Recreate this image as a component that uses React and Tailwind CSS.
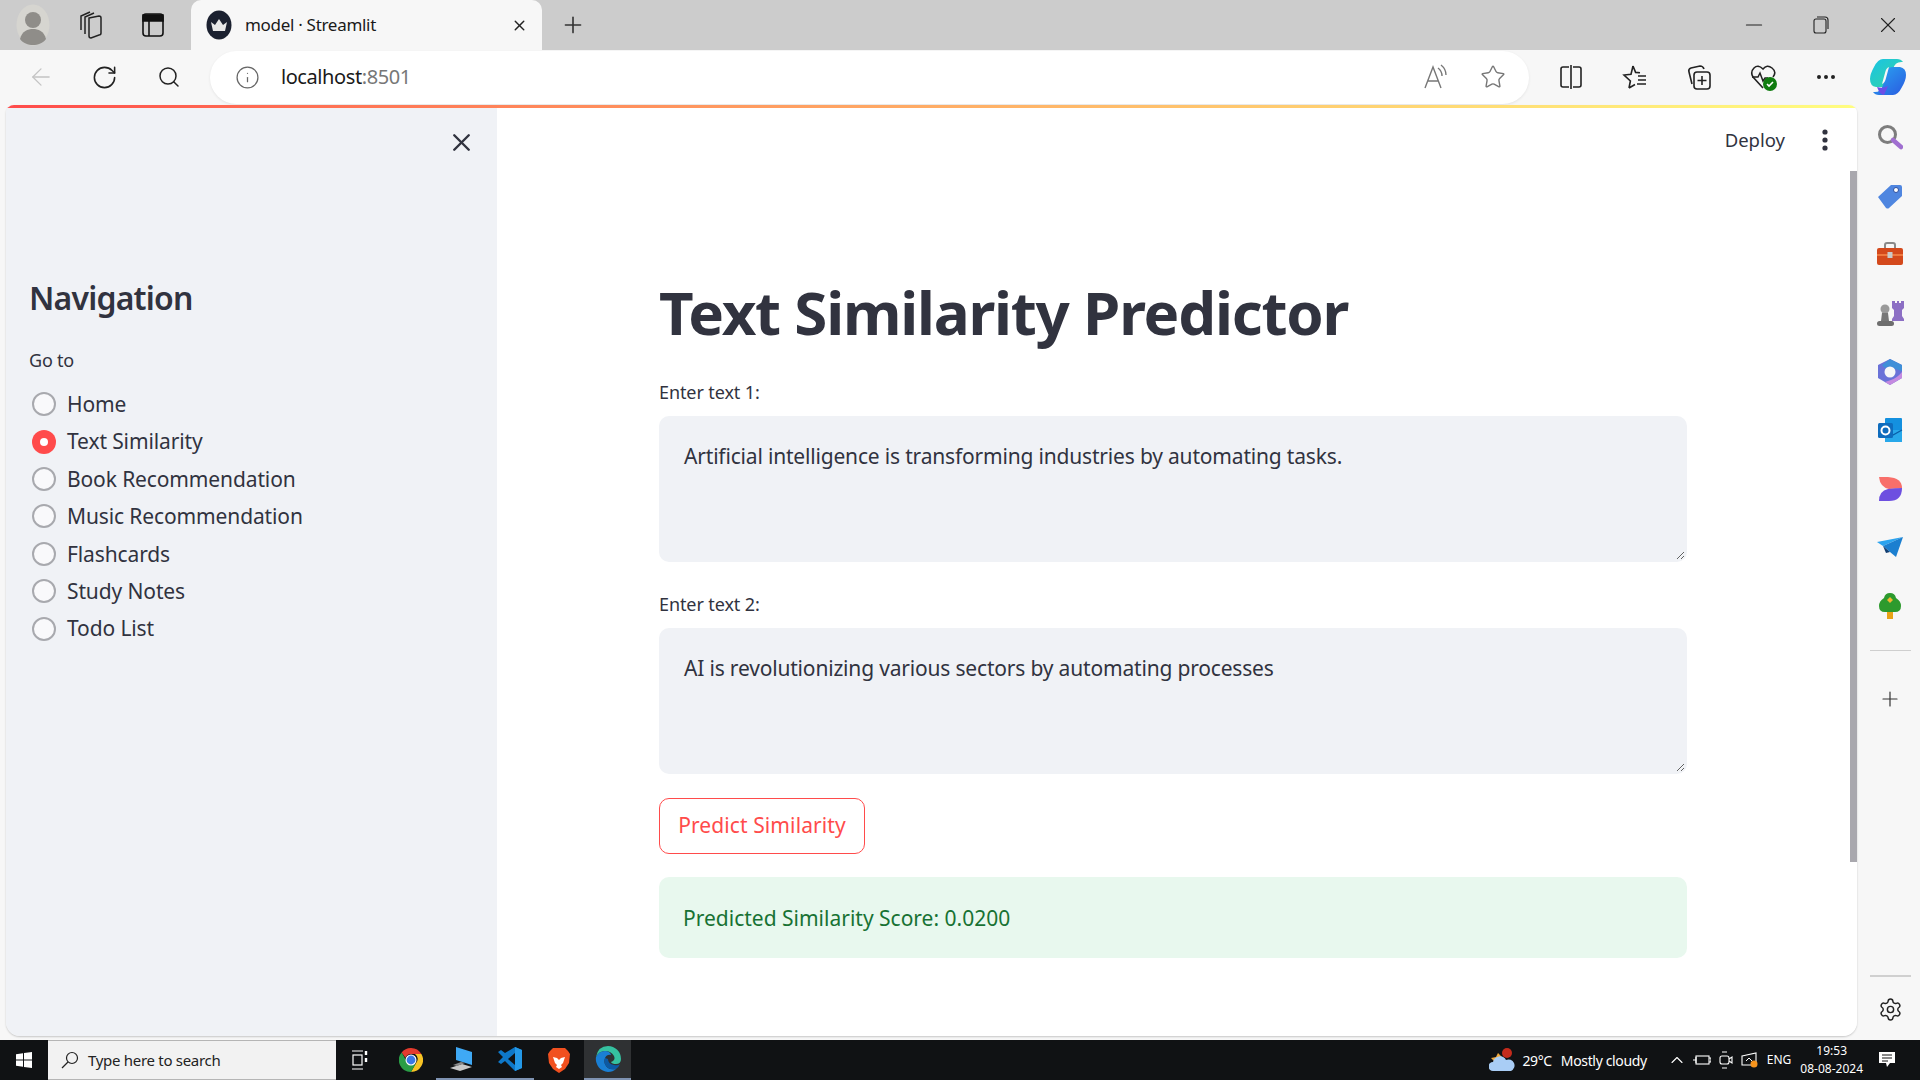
import React from 'react';
import { X, Plus, RotateCw, Search, Info, Star, ArrowLeft, Settings, MoreHorizontal, ChevronUp, Minus } from 'lucide-react';

const NAV_ITEMS = ['Home', 'Text Similarity', 'Book Recommendation', 'Music Recommendation', 'Flashcards', 'Study Notes', 'Todo List'];

// Small hand drawn icons for the browser chrome, the side rail and the taskbar
const Avatar = () => (
  <svg width="34" height="42" viewBox="0 0 34 42">
    <ellipse cx="17" cy="21" rx="16.5" ry="20.5" fill="#d6d5d0" />
    <circle cx="17" cy="16" r="8" fill="#8f8d89" />
    <path d="M4 35c2-8 8-10 13-10s11 2 13 10c-3 4-8 6-13 6s-10-2-13-6z" fill="#8f8d89" />
  </svg>
);
const CollectionsTab = () => (
  <svg width="26" height="30" viewBox="0 0 26 30" fill="none" stroke="#222" strokeWidth="1.5">
    <path d="M12 8l10-2q2 0 2 2v15q0 2-2 2l-8 3q-2 0-2-2z" />
    <path d="M8 24V7l9-4M4 20V6l9-4" />
  </svg>
);
const TabsIcon = () => (
  <svg width="22" height="24" viewBox="0 0 22 24" fill="none" stroke="#111" strokeWidth="1.6">
    <rect x="1" y="1" width="20" height="22" rx="3" />
    <path d="M1 2h20v6H1z" fill="#111" />
    <path d="M7 8v15" />
  </svg>
);
const Favicon = () => (
  <svg width="26" height="30" viewBox="0 0 26 30">
    <ellipse cx="13" cy="15" rx="12.5" ry="14.5" fill="#1b2130" />
    <path d="M5 12l4 3 4-6 4 6 4-3-2 9H7z" fill="#e8e8e8" />
  </svg>
);
const ReadAloud = () => (
  <svg width="26" height="26" viewBox="0 0 26 26" fill="none" stroke="#777" strokeWidth="1.4">
    <path d="M2 24L10 3l8 21M5 17h10" />
    <path d="M15 4q4 3 4 8M18 1q5 4 5 10" />
  </svg>
);
const SplitIcon = () => (
  <svg width="24" height="26" viewBox="0 0 24 26" fill="none" stroke="#222" strokeWidth="1.6">
    <path d="M10 3H4q-2 0-2 2v16q0 2 2 2h6M14 3h6q2 0 2 2v16q0 2-2 2h-6M12 1v24" />
  </svg>
);
const FavoritesIcon = () => (
  <svg width="26" height="26" viewBox="0 0 26 26" fill="none" stroke="#222" strokeWidth="1.6">
    <path d="M11 2l2.6 6.4 4.4.4M7 24l1.4-7L2 11l7-.8L11 2M7 24l6-3.5" />
    <path d="M16 12h8M16 16h8M15 20h9" />
  </svg>
);
const CollectionsIcon = () => (
  <svg width="26" height="28" viewBox="0 0 26 28" fill="none" stroke="#222" strokeWidth="1.6">
    <path d="M6 21l-3-12q-1-3 2-4l9-2q3 0 4 3" />
    <rect x="8" y="9" width="16" height="17" rx="3" />
    <path d="M16 13v9M11.5 17.500h9" />
  </svg>
);
const HeartIcon = () => (
  <svg width="28" height="28" viewBox="0 0 28 28">
    <path d="M13 25L3 14q-3-5 1-9t9 1q4-5 9-1t1 9" fill="none" stroke="#222" strokeWidth="1.6" />
    <path d="M2 14h6l2-4 3 8 2-3h3" fill="none" stroke="#222" strokeWidth="1.5" />
    <circle cx="20" cy="21" r="7" fill="#107c10" />
    <path d="M17 21l2 2 4-4" fill="none" stroke="#fff" strokeWidth="1.6" />
  </svg>
);
const Copilot = () => (
  <svg width="38" height="38" viewBox="0 0 38 38">
    <defs>
      <linearGradient id="cpa" x1="0" y1="0" x2="1" y2="1">
        <stop offset="0" stopColor="#19c3e6" />
        <stop offset="1" stopColor="#37d6a0" />
      </linearGradient>
      <linearGradient id="cpb" x1="0" y1="0" x2="1" y2="1">
        <stop offset="0" stopColor="#2aa8f2" />
        <stop offset="1" stopColor="#2a5ae0" />
      </linearGradient>
    </defs>
    <path d="M14 1h14q4 0 6 3-8-1-10 7l-4 14q-1 4-6 4H7q-6-1-6-8 0-5 4-12 4-8 9-8z" fill="url(#cpa)" />
    <path d="M24 37H10q-4 0-6-3 8 1 10-7l4-14q1-4 6-4h7q6 1 6 8 0 5-4 12-4 8-9 8z" fill="url(#cpb)" />
    <path d="M8 29q6 2 11-1l-4 9q-4 0-7-8z" fill="#6b4ee6" />
    <path d="M20 9q-3 1-4 6l-3 11q3-1 4-6z" fill="#f7f7f7" />
  </svg>
);
const RailSearch = () => (
  <svg width="26" height="26" viewBox="0 0 26 26">
    <circle cx="10.500" cy="10.500" r="8" fill="none" stroke="#7d7d7d" strokeWidth="3" />
    <path d="M16 16l8 7" stroke="#a06fd0" strokeWidth="4.500" strokeLinecap="round" />
  </svg>
);
const RailTag = () => (
  <svg width="26" height="26" viewBox="0 0 26 26">
    <path d="M1 14L14 2h9q2 0 2 2v9L12 25q-1 1-3 0z" fill="#4f86e0" />
    <circle cx="19" cy="7" r="2.500" fill="#fff" stroke="#2d4fa0" />
  </svg>
);
const RailToolbox = () => (
  <svg width="28" height="24" viewBox="0 0 28 24">
    <path d="M9 6V3q0-2 2-2h6q2 0 2 2v3" fill="none" stroke="#8a8a8a" strokeWidth="2" />
    <rect x="1" y="6" width="26" height="17" rx="2" fill="#d4491c" />
    <rect x="1" y="12" width="26" height="2" fill="#f0793f" />
    <rect x="11.500" y="10" width="5" height="6" fill="#c9c9c9" />
  </svg>
);
const RailChess = () => (
  <svg width="28" height="28" viewBox="0 0 28 28">
    <path d="M16 2h3v2h2V2h2v2h2V2h3v7l-2 2v6l2 3v2H16v-2l2-3v-6l-2-2z" fill="#8c6fc4" />
    <circle cx="9" cy="10" r="4.500" fill="#9a9a9a" />
    <path d="M6 14h6l1 8H5z" fill="#777" />
    <rect x="1" y="22" width="17" height="5" rx="2.500" fill="#6e6e6e" />
  </svg>
);
const RailM365 = () => (
  <svg width="26" height="28" viewBox="0 0 26 28">
    <path d="M13 1l12 6v13l-12 7L1 20V7z" fill="#6a72d8" />
    <path d="M13 1l12 6v6l-7-2q-4-4-10-1l-3-3z" fill="#3f8fd8" />
    <path d="M25 14v6l-12 7-5-3 6-2q6-2 11-8z" fill="#c58ae0" />
    <circle cx="13" cy="14" r="5.500" fill="#f7f7f7" />
  </svg>
);
const RailOutlook = () => (
  <svg width="26" height="26" viewBox="0 0 26 26">
    <rect x="8" y="1" width="17" height="24" rx="1" fill="#1490df" />
    <path d="M8 13l17 0v12H8z" fill="#28a8ea" />
    <path d="M8 13l8 5 9-5" fill="none" stroke="#0a5fa8" strokeWidth="1.400" />
    <rect x="1" y="6" width="15" height="15" rx="1.500" fill="#0f6cbd" />
    <circle cx="8.500" cy="13.500" r="4" fill="none" stroke="#fff" strokeWidth="2" />
  </svg>
);
const RailDesigner = () => (
  <svg width="24" height="26" viewBox="0 0 24 26">
    <path d="M1 1h9q14 1 14 11l-13 1Q2 11 1 1z" fill="#f86f6a" />
    <path d="M24 12q0 13-13 13H1q0-10 9-12 7-1 14-1z" fill="#6d4fe0" />
  </svg>
);
const RailSend = () => (
  <svg width="26" height="22" viewBox="0 0 26 22">
    <path d="M0 6L26 1 6 10z" fill="#2aa3ef" />
    <path d="M6 10L26 1l-7 20-6-5z" fill="#1b7fd0" />
    <path d="M6 10l3 7 4-1z" fill="#123d70" />
  </svg>
);
const RailTree = () => (
  <svg width="24" height="26" viewBox="0 0 24 26">
    <rect x="9" y="18" width="6" height="8" fill="#e8a317" />
    <path d="M12 0q5 0 6 5 5 3 5 8 0 6-6 6H7q-6 0-6-6 0-5 5-8 1-5 6-5z" fill="#2d9a2d" />
    <path d="M12 4l3 3-3 3-3-3z" fill="#f2b632" />
  </svg>
);
const WinLogo = () => (
  <svg width="16" height="16" viewBox="0 0 16 16" fill="#fff">
    <path d="M0 2.300L7 1.300V7.500H0zM8 1.100L16 0V7.500H8zM0 8.500H7V14.700L0 13.700zM8 8.500H16V16L8 14.900z" />
  </svg>
);
const SearchGlass = () => (
  <svg width="18" height="18" viewBox="0 0 18 18" fill="none" stroke="#222" strokeWidth="1.200">
    <circle cx="11" cy="7" r="5.500" />
    <path d="M7 11l-6 6" />
  </svg>
);
const TaskView = () => (
  <svg width="16" height="20" viewBox="0 0 16 20" fill="none" stroke="#fff" strokeWidth="1.200">
    <path d="M0 1h11M0 19h11" />
    <rect x="1" y="5" width="9" height="10" />
    <path d="M14 1v4M14 8v4" strokeWidth="2.400" />
  </svg>
);
const Chrome = () => (
  <svg width="24" height="24" viewBox="0 0 24 24">
    <path d="M12 0a12 12 0 0 1 10.400 6H12a6 6 0 0 0-5.600 3.800L2.600 4.400A12 12 0 0 1 12 0z" fill="#e33b2e" />
    <path d="M22.400 6A12 12 0 0 1 12 24l4.800-8.600A6 6 0 0 0 16 6z" fill="#f7c325" />
    <path d="M12 24A12 12 0 0 1 2.600 4.400l5 8.600a6 6 0 0 0 9.200 2.400z" fill="#2a9d46" />
    <circle cx="12" cy="12" r="5.500" fill="#fff" />
    <circle cx="12" cy="12" r="4.400" fill="#3b78e7" />
  </svg>
);
const PcApp = () => (
  <svg width="24" height="26" viewBox="0 0 24 26">
    <path d="M7 1l16 5v13L7 14z" fill="#3fa9f5" />
    <path d="M1 22l12-4 10 3-12 4z" fill="#c8c8c8" />
    <path d="M4 19l8-3 4 1-8 3z" fill="#8a8a8a" />
  </svg>
);
const VsCode = () => (
  <svg width="24" height="24" viewBox="0 0 24 24">
    <path d="M17 0l7 3v18l-7 3-10-10-4 3-3-2 5-5-5-5 3-2 4 3z" fill="#0e78c9" />
    <path d="M17 0l7 3v18l-7 3z" fill="#2499e8" />
    <path d="M17 6v12l-7-6z" fill="#101214" />
  </svg>
);
const Brave = () => (
  <svg width="22" height="26" viewBox="0 0 22 26">
    <path d="M5 1h12l3 3 2 3-1 9-4 6-6 4-6-4-4-6L0 7l2-3z" fill="#f1501f" />
    <path d="M5 10l4 1 2 2 2-2 4-1-2 6-2 2 1 2-3 2-3-2 1-2-2-2z" fill="#fff" />
  </svg>
);
const Edge = () => (
  <svg width="26" height="26" viewBox="0 0 26 26">
    <path d="M13 0a13 13 0 0 1 13 13q0 5-5 5-4 0-5-2 5-2 3-6-3-5-9-5Q4 5 1 11 3 0 13 0z" fill="#35c1a0" />
    <path d="M1 11q3-6 9-6 5 0 6 4-4-1-6 3-2 6 3 10 3 2 8 1-3 3-8 3A13 13 0 0 1 1 11z" fill="#1a7fd4" />
    <path d="M10 12q-2 6 3 10 3 2 8 1 3-2 4-5-2 2-6 1-6-1-6-6z" fill="#0c59a4" />
  </svg>
);
const Weather = () => (
  <svg width="26" height="24" viewBox="0 0 26 24">
    <path d="M2 10l5-1 2-4 3 3 3 3-8 4z" fill="#f2a93b" />
    <path d="M4 23a4 4 0 0 1 0-9 7 7 0 0 1 13-2 6 6 0 0 1 5 11z" fill="#a9cdf5" />
    <circle cx="18" cy="5" r="5" fill="#c42b1c" />
  </svg>
);
const PlugBattery = () => (
  <svg width="18" height="14" viewBox="0 0 18 14" fill="none" stroke="#fff" strokeWidth="1.100">
    <rect x="3" y="3" width="13" height="8" />
    <path d="M16 5h2v4h-2" />
    <path d="M0 7h3M3 4v6" />
  </svg>
);
const Camera = () => (
  <svg width="14" height="18" viewBox="0 0 14 18" fill="none" stroke="#fff" strokeWidth="1.100">
    <rect x="1" y="5" width="9" height="8" rx="2" />
    <path d="M10 8l3-2v6l-3-2M3 1h5M3 17h5" />
  </svg>
);
const ScreenTray = () => (
  <svg width="18" height="16" viewBox="0 0 18 16">
    <path d="M1 4l14-3v12H1z" fill="none" stroke="#fff" strokeWidth="1.100" />
    <path d="M5 9l3-3 3 3" fill="none" stroke="#fff" />
    <circle cx="13" cy="12" r="3.500" fill="#f7941d" />
  </svg>
);
const Notification = () => (
  <svg width="18" height="18" viewBox="0 0 18 18">
    <path d="M1 1h16v11h-5l-3 4-1-4H1z" fill="#fff" />
    <path d="M4 4h10M4 7h10M4 10h6" stroke="#111" strokeWidth="1" />
  </svg>
);

const TabStrip = () => (
  <div className="flex h-[50px] shrink-0 bg-[#cccccc]">
    <div className="flex w-[66px] items-center justify-center"><Avatar /></div>
    <div className="flex w-[48px] items-center justify-center"><CollectionsTab /></div>
    <div className="flex w-[77px] items-center justify-center"><TabsIcon /></div>
    <div className="flex w-[351px] items-center rounded-t-[10px] bg-[#f7f7f7] pl-[15px] pr-[14px]">
      <Favicon />
      <span className="ml-[13px] flex-1 text-[17px] tracking-[-0.3px] text-[#1a1a1a]">model · Streamlit</span>
      <X size={17} strokeWidth={2} color="#222" />
    </div>
    <div className="flex w-[62px] items-center justify-center"><Plus size={26} strokeWidth={1.5} color="#333" /></div>
    <div className="flex flex-1 items-center justify-end gap-[46px] pr-[19px]">
      <Minus size={26} strokeWidth={1} color="#222" />
      <svg width="16" height="18" viewBox="0 0 16 18" fill="none" stroke="#222" strokeWidth="1.100">
        <rect x="1" y="3" width="12" height="14" rx="2" />
        <path d="M4 1h8q3 0 3 3v9" />
      </svg>
      <X size={26} strokeWidth={1} color="#222" />
    </div>
  </div>
);

const Toolbar = () => (
  <div className="flex h-[55px] shrink-0 items-center bg-[#f7f7f7] pb-[3px] pt-[2px]">
    <div className="flex w-[82px] justify-center"><ArrowLeft size={28} strokeWidth={1.100} color="#c4c4c4" /></div>
    <div className="flex w-[46px] justify-center"><RotateCw size={27} strokeWidth={1.400} color="#222" /></div>
    <div className="flex w-[82px] justify-center"><Search size={24} strokeWidth={1.500} color="#222" /></div>
    <div className="flex h-[53px] w-[1320px] items-center rounded-full bg-white pl-[25px] pr-[23px] shadow-[0_1px_3px_rgba(0,0,0,0.08)]">
      <Info size={25} strokeWidth={1.200} color="#666" />
      <span className="ml-[21px] flex-1 text-[20px] tracking-[-0.4px] text-[#1a1a1a]">localhost<span className="text-[#777]">:8501</span></span>
      <ReadAloud />
      <Star size={26} strokeWidth={1.300} color="#777" className="ml-[31px]" />
    </div>
    <div className="ml-[10px] flex w-[64px] justify-center"><SplitIcon /></div>
    <div className="flex w-[64px] justify-center"><FavoritesIcon /></div>
    <div className="flex w-[64px] justify-center"><CollectionsIcon /></div>
    <div className="flex w-[65px] justify-center"><HeartIcon /></div>
    <div className="flex w-[60px] justify-center"><MoreHorizontal size={24} strokeWidth={2} color="#222" /></div>
    <div className="flex w-[64px] justify-center"><Copilot /></div>
  </div>
);

const Sidebar = () => (
  <aside className="flex w-[491px] shrink-0 flex-col bg-[#f0f2f6] pl-[23px] pt-[23px] text-[#31333f]">
    <div className="flex justify-end pr-[21px]"><X size={29} strokeWidth={2} color="#31333f" /></div>
    <h2 className="mt-[118px] text-[32px] font-semibold leading-[46px] tracking-[-0.8px]">Navigation</h2>
    <p className="mt-[27px] text-[18px] leading-[24px] tracking-[-0.2px]">Go to</p>
    <ul className="mt-[14px] flex flex-col">
      {NAV_ITEMS.map((item) => (
        <li key={item} className="flex h-[37.400px] items-center pl-[3px]">
          {item === 'Text Similarity' ? (
            <span className="-mt-[1px] flex h-[24px] w-[24px] items-center justify-center rounded-full bg-[#ff4b4b]">
              <span className="h-[8px] w-[8px] rounded-full bg-white" />
            </span>
          ) : (
            <span className="-mt-[1px] h-[24px] w-[24px] rounded-full border-2 border-[#a8a9ae] bg-[#f9f9fb]" />
          )}
          <span className="ml-[11px] text-[21px] tracking-[-0.12px]">{item}</span>
        </li>
      ))}
    </ul>
  </aside>
);

const TextBox = ({ label, value }) => (
  <div>
    <label className="block text-[18px] leading-[24px] tracking-[-0.1px] text-[#31333f]">{label}</label>
    {/* wrapper keeps the resize handle off the rounded corner */}
    <div className="mt-[12px] rounded-[10px] bg-[#f0f2f6] p-[2px]">
      <textarea
        defaultValue={value}
        className="block h-[142px] w-full resize-y bg-transparent px-[23px] py-[22px] text-[21px] leading-[32px] tracking-[-0.18px] text-[#31333f] outline-none"
      />
    </div>
  </div>
);

const Main = () => (
  <main className="relative flex flex-1 flex-col bg-white text-[#31333f]">
    <div className="flex items-center justify-end pr-[29px] pt-[21px]">
      <span className="text-[18.500px]">Deploy</span>
      <svg className="ml-[37px]" width="6" height="22" viewBox="0 0 6 22" fill="#31333f">
        <circle cx="3" cy="3" r="2.600" />
        <circle cx="3" cy="11" r="2.600" />
        <circle cx="3" cy="19" r="2.600" />
      </svg>
    </div>
    <div className="ml-[162px] mr-[170px] flex flex-col">
      <h1 className="mt-[120px] text-[60px] font-bold leading-[76px] tracking-[-1.200px]">Text Similarity Predictor</h1>
      <div className="mt-[30px]"><TextBox label="Enter text 1:" value="Artificial intelligence is transforming industries by automating tasks." /></div>
      <div className="mt-[30px]"><TextBox label="Enter text 2:" value="AI is revolutionizing various sectors by automating processes" /></div>
      <button className="mt-[24px] h-[56px] w-[206px] rounded-[10px] border border-[#ff4b4b] bg-white text-[21px] tracking-[0.1px] text-[#ff4b4b]">Predict Similarity</button>
      <div className="mt-[23px] flex h-[81px] items-center rounded-[10px] bg-[#e8f8ee] px-[24px] pt-[3px] text-[21px] text-[#177233]">Predicted Similarity Score: 0.0200</div>
    </div>
    {/* overlay scrollbar */}
    <div className="absolute right-0 top-[66px] h-[691px] w-[7px] bg-[#a9a8ae]" />
  </main>
);

const RailIcon = ({ children }) => (
  <div className="flex h-[58.600px] items-center justify-center">{children}</div>
);

const Rail = () => (
  <div className="flex w-[63px] shrink-0 flex-col pb-[18px] pl-[3px] pt-[3px]">
    <RailIcon><RailSearch /></RailIcon>
    <RailIcon><RailTag /></RailIcon>
    <RailIcon><RailToolbox /></RailIcon>
    <RailIcon><RailChess /></RailIcon>
    <RailIcon><RailM365 /></RailIcon>
    <RailIcon><RailOutlook /></RailIcon>
    <RailIcon><RailDesigner /></RailIcon>
    <RailIcon><RailSend /></RailIcon>
    <RailIcon><RailTree /></RailIcon>
    <div className="mx-auto mt-[15px] h-[1px] w-[41px] bg-[#cfcfcf]" />
    <div className="mt-[36px] flex justify-center"><Plus size={24} strokeWidth={1.200} color="#333" /></div>
    <div className="mx-auto mt-auto h-[2px] w-[41px] bg-[#d0d0d0]" />
    <div className="mt-[20px] flex justify-center"><Settings size={25} strokeWidth={1.400} color="#222" /></div>
  </div>
);

const Taskbar = () => (
  <div className="flex h-[40px] shrink-0 items-center bg-[#101214] text-white">
    <div className="flex w-[48px] justify-center"><WinLogo /></div>
    <div className="flex h-full w-[288px] items-center border-y border-[#b5b5b5] bg-[#f2f2f2] pl-[13px] text-[15px] text-[#222]">
      <SearchGlass />
      <span className="ml-[9px] tracking-[-0.3px]">Type here to search</span>
    </div>
    <div className="flex w-[48px] justify-center"><TaskView /></div>
    <div className="ml-[2px] flex w-[50px] justify-center"><Chrome /></div>
    <div className="flex h-full w-[49px] items-center justify-center border-b-2 border-[#7f93b2]"><PcApp /></div>
    <div className="flex h-full w-[49px] items-center justify-center border-b-2 border-[#7f93b2]"><VsCode /></div>
    <div className="flex w-[49px] justify-center"><Brave /></div>
    <div className="ml-[1px] flex h-full w-[47px] items-center justify-center border-b-2 border-[#7f93b2] bg-[#2f3133]"><Edge /></div>
    <div className="ml-auto flex items-center">
      <Weather />
      <span className="ml-[7px] text-[14px] tracking-[-0.35px]">29°C</span>
      <span className="ml-[9px] text-[14px] tracking-[-0.35px]">Mostly cloudy</span>
      <ChevronUp size={20} strokeWidth={1.300} className="ml-[20px]" />
      <span className="ml-[6px]"><PlugBattery /></span>
      <span className="ml-[8px]"><Camera /></span>
      <span className="ml-[8px]"><ScreenTray /></span>
      <span className="ml-[8px] text-[12px]">ENG</span>
      <div className="ml-[9px] flex flex-col items-center text-[12px] leading-[18px]">
        <span>19:53</span>
        <span>08-08-2024</span>
      </div>
      <span className="ml-[15px] mr-[24px]"><Notification /></span>
    </div>
  </div>
);

export default function App() {
  return (
    <div className="flex h-[1080px] w-[1920px] flex-col overflow-hidden bg-[#f7f7f7] font-['Noto_Sans',sans-serif]">
      <TabStrip />
      <Toolbar />
      <div className="flex min-h-0 flex-1">
        <div className="relative mb-[4px] ml-[6px] flex flex-1 overflow-hidden rounded-b-[14px] rounded-t-[8px] shadow-[0_1px_2px_rgba(0,0,0,0.2)]">
          <Sidebar />
          <Main />
          {/* streamlit top decoration */}
          <div className="absolute inset-x-0 top-0 h-[3px] bg-gradient-to-r from-[#ff4b4b] to-[#fffd80]" />
        </div>
        <Rail />
      </div>
      <Taskbar />
    </div>
  );
}
